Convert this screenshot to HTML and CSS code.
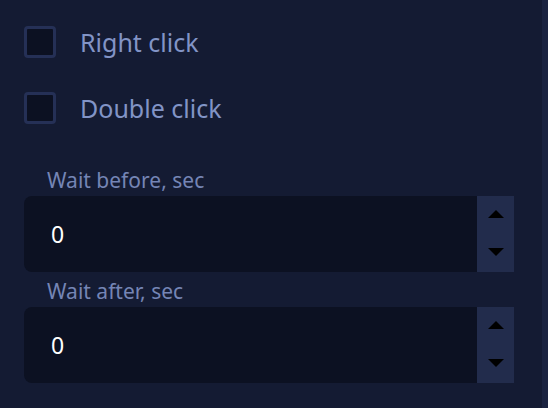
FILE: index.html
```html
<!DOCTYPE html>
<html>
<head>
<meta charset="utf-8">
<link rel="stylesheet" href="styles.css">
</head>
<body>
<div class="panel">
  <label class="check">
    <span class="box"></span>
    <span class="check-text">Right click</span>
  </label>
  <label class="check">
    <span class="box"></span>
    <span class="check-text">Double click</span>
  </label>
  <div class="field first">
    <div class="field-label">Wait before, sec</div>
    <div class="number">
      <div class="value">0</div>
      <div class="spin">
        <span class="tri up"></span>
        <span class="tri down"></span>
      </div>
    </div>
  </div>
  <div class="field">
    <div class="field-label">Wait after, sec</div>
    <div class="number">
      <div class="value">0</div>
      <div class="spin">
        <span class="tri up"></span>
        <span class="tri down"></span>
      </div>
    </div>
  </div>
</div>
<div class="scrollbar"></div>
</body>
</html>
```
FILE: styles.css
```css
html, body {
  margin: 0;
  padding: 0;
  height: 100%;
}
body {
  background: #141b33;
  font-family: "Noto Sans", "Open Sans", sans-serif;
  display: flex;
  overflow: hidden;
}
.panel {
  flex: 1;
  padding: 26px 0 0 24px;
  display: flex;
  flex-direction: column;
}
.scrollbar {
  width: 6px;
  background: #1a2340;
}
.check {
  display: flex;
  align-items: center;
  height: 32px;
  margin-bottom: 34px;
}
.box {
  width: 26px;
  height: 26px;
  border: 3px solid #253056;
  border-radius: 4px;
  background: #0c1122;
}
.check-text {
  margin-left: 24px;
  font-size: 25px;
  color: #8294c6;
  line-height: 32px;
}
.field.first {
  margin-top: 6px;
}
.field {
  margin-bottom: 3px;
}
.field-label {
  margin-left: 23px;
  font-size: 21px;
  color: #7585b5;
  line-height: 32px;
  height: 32px;
}
.number {
  display: flex;
  width: 490px;
  height: 76px;
}
.value {
  flex: 1;
  background: #0c1122;
  border-radius: 8px 0 0 8px;
  color: #ffffff;
  font-size: 23px;
  line-height: 76px;
  padding-left: 27px;
}
.spin {
  width: 37px;
  background: #222c4c;
  display: flex;
  flex-direction: column;
  align-items: center;
  justify-content: space-between;
  padding: 14px 0 16px;
  box-sizing: border-box;
}
.tri {
  width: 0;
  height: 0;
  border-left: 8px solid transparent;
  border-right: 8px solid transparent;
}
.tri.up {
  border-bottom: 8px solid #000;
}
.tri.down {
  border-top: 8px solid #000;
}
```
